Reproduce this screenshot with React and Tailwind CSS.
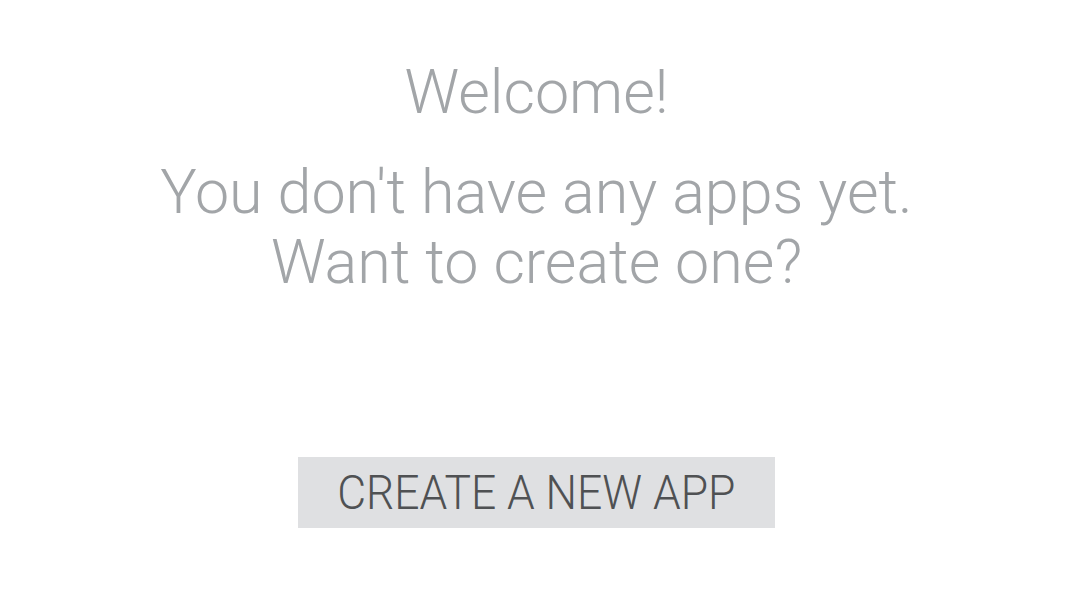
import React from 'react';

// Empty state: welcome message + create button
function App() {
  return (
    <div className="min-h-screen bg-white flex flex-col items-center font-['Roboto',sans-serif]">
      <h1 className="mt-[56px] text-[61px] leading-[72px] font-light text-[#a2a5a8]">Welcome!</h1>
      <p className="mt-[29px] text-[61px] leading-[70px] font-light text-[#a2a5a8] text-center">
        You don't have any apps yet.
        <br />
        Want to create one?
      </p>
      <button
        type="button"
        className="mt-[160px] w-[477px] h-[71px] bg-[#dfe0e2] text-[#4f5153] text-[48px] font-light uppercase flex items-center justify-center"
      >
        <span className="inline-block scale-x-[0.925]">Create a new app</span>
      </button>
    </div>
  );
}

export default App;
